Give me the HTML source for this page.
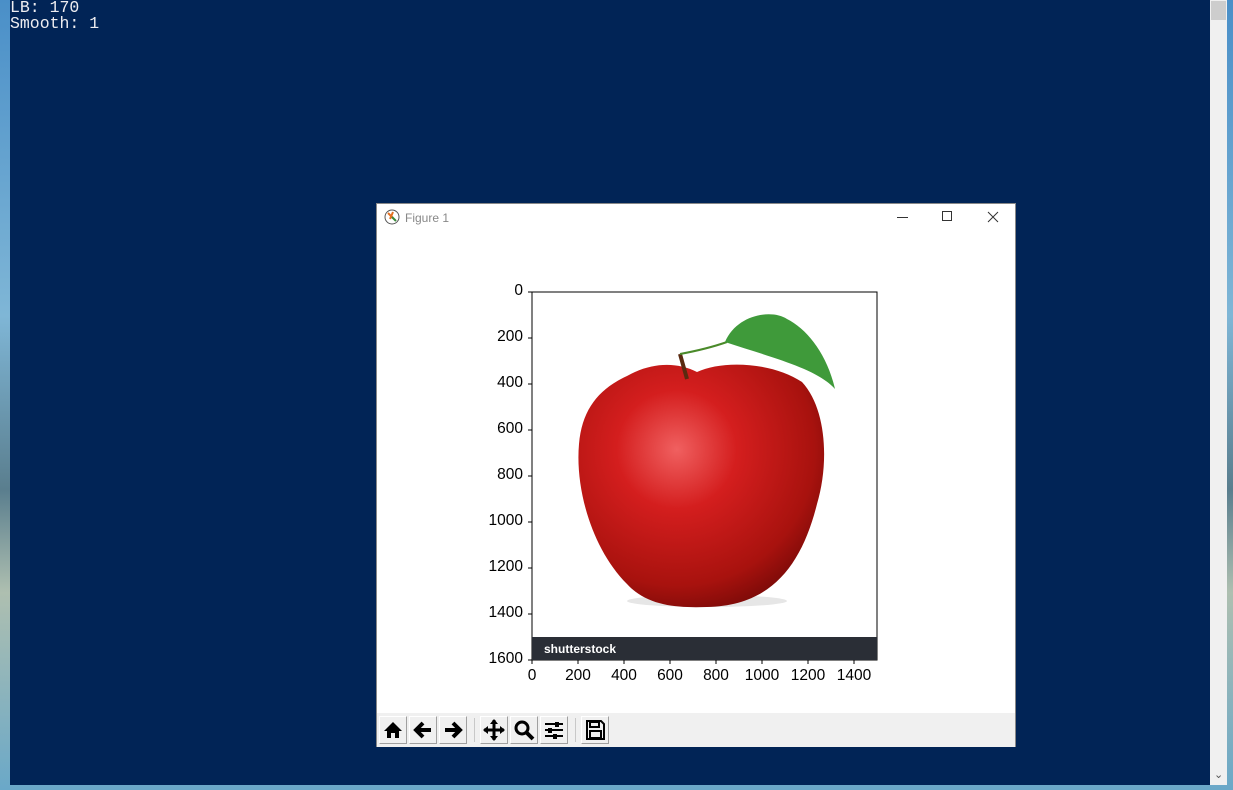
<!DOCTYPE html>
<html><head><style>
*{margin:0;padding:0;box-sizing:border-box}
body{width:1233px;height:790px;overflow:hidden;position:relative;background:linear-gradient(180deg,#4a8fc8 0%,#7fb6d6 40%,#5a7e8e 62%,#aebfb0 75%,#6aa8c8 100%);font-family:"Liberation Sans",sans-serif}
#term{position:absolute;left:10px;top:0;width:1200px;height:785px;background:#012456}
#sb{position:absolute;left:1210px;top:0;width:17px;height:785px;background:#f0f0f0}
#txt{position:absolute;left:10px;top:0px;font:16.5px/16px "Liberation Mono",monospace;color:#eeedf0;white-space:pre}
#win{position:absolute;left:376px;top:203px;width:640px;height:544px;background:#fff;border:1px solid #888}
.tb{position:absolute;left:0;top:509px;width:638px;height:34px;background:#f0f0f0}
.btn{position:absolute;top:3px;width:28px;height:28px;background:#f0f0f0;border:1px solid;border-color:#fff #a0a0a0 #a0a0a0 #fff}
.sep{position:absolute;top:5px;width:1px;height:24px;background:#c8c8c8}
.tl{position:absolute;font-size:15.5px;color:#000;text-align:right;width:60px}
.xl{position:absolute;font-size:15.5px;color:#000;width:60px;text-align:center}
</style></head><body>
<div id="term"></div>
<div id="sb"><div style="position:absolute;left:1px;top:1px;width:15px;height:19px;background:#cdcdcd"></div><div style="position:absolute;left:4px;top:768px;font-size:11px;color:#555">&#8964;</div></div>
<div id="txt">LB: 170
Smooth: 1</div>
<div id="win">
 <svg style="position:absolute;left:7px;top:5px" width="16" height="16"><circle cx="8" cy="8" r="7" fill="#fff" stroke="#555"/><path d="M4 4L9 9M9 3L6 10" stroke="#e57020" stroke-width="2"/><path d="M8 8L12 12" stroke="#3a8a3a" stroke-width="2"/></svg>
 <div style="position:absolute;left:28px;top:7px;font-size:12px;color:#888">Figure 1</div>
 <div style="position:absolute;left:520px;top:13px;width:11px;height:1px;background:#333"></div>
 <div style="position:absolute;left:565px;top:7px;width:10px;height:10px;border:1px solid #333"></div>
 <svg style="position:absolute;left:610px;top:7px" width="12" height="12"><path d="M1 1L11 11M11 1L1 11" stroke="#333"/></svg>

 <svg style="position:absolute;left:0;top:0" width="640" height="510">
  <defs>
   <radialGradient id="ap" cx="0.4" cy="0.35" r="0.7">
    <stop offset="0" stop-color="#f06060"/><stop offset="0.35" stop-color="#d41e1e"/><stop offset="0.8" stop-color="#a8120e"/><stop offset="1" stop-color="#7a0a08"/>
   </radialGradient>
  </defs>
  <rect x="155" y="88" width="345" height="368" fill="#fff" stroke="#000"/>
  <ellipse cx="330" cy="397" rx="80" ry="6" fill="#e6e6e6"/>
  <path d="M250 172 C 275 158, 300 158, 320 168 C 345 156, 395 158, 425 178 C 450 205, 452 260, 440 300 C 425 360, 395 402, 330 403 C 300 404, 270 402, 250 380 C 215 345, 198 285, 202 240 C 205 205, 222 185, 250 172 Z" fill="url(#ap)"/>
  <path d="M310 175 L303 150" stroke="#5a2a10" stroke-width="4"/>
  <path d="M303 150 Q330 145 350 138" stroke="#4a8a2a" stroke-width="2" fill="none"/>
  <path d="M348 138 C 360 110, 395 105, 410 115 C 430 125, 450 150, 458 185 C 440 165, 400 155, 348 138 Z" fill="#3f9a3a"/>
  <rect x="155" y="433" width="345" height="23" fill="#2a2e36"/>
  <text x="167" y="449" font-size="12" font-weight="bold" fill="#fff" font-family="Liberation Sans">shutterstock</text>
  <g stroke="#000">
   <path d="M155 456v4M201 456v4M247 456v4M293 456v4M339 456v4M385 456v4M431 456v4M477 456v4"/>
   <path d="M151 88h4M151 134h4M151 180h4M151 226h4M151 272h4M151 318h4M151 364h4M151 410h4M151 456h4"/>
  </g>
 </svg>
 <div class="tl" style="left:86px;top:78px">0</div>
 <div class="tl" style="left:86px;top:124px">200</div>
 <div class="tl" style="left:86px;top:170px">400</div>
 <div class="tl" style="left:86px;top:216px">600</div>
 <div class="tl" style="left:86px;top:262px">800</div>
 <div class="tl" style="left:86px;top:308px">1000</div>
 <div class="tl" style="left:86px;top:354px">1200</div>
 <div class="tl" style="left:86px;top:400px">1400</div>
 <div class="tl" style="left:86px;top:446px">1600</div>
 <div class="xl" style="left:125px;top:463px">0</div>
 <div class="xl" style="left:171px;top:463px">200</div>
 <div class="xl" style="left:217px;top:463px">400</div>
 <div class="xl" style="left:263px;top:463px">600</div>
 <div class="xl" style="left:309px;top:463px">800</div>
 <div class="xl" style="left:355px;top:463px">1000</div>
 <div class="xl" style="left:401px;top:463px">1200</div>
 <div class="xl" style="left:447px;top:463px">1400</div>

 <div class="tb">
  <div class="btn" style="left:2px"><svg width="26" height="26"><path d="M4 14L13 5L22 14H19V21H15V16H11V21H7V14Z" fill="#000"/></svg></div>
  <div class="btn" style="left:32px"><svg width="26" height="26"><path d="M13 6L6 13L13 20M6 13H21" stroke="#000" stroke-width="4" fill="none"/></svg></div>
  <div class="btn" style="left:62px"><svg width="26" height="26"><path d="M13 6L20 13L13 20M20 13H5" stroke="#000" stroke-width="4" fill="none"/></svg></div>
  <div class="sep" style="left:97px"></div>
  <div class="btn" style="left:103px"><svg width="26" height="26"><path d="M13 3V23M3 13H23" stroke="#000" stroke-width="3"/><path d="M13 2L9 7H17ZM13 24L9 19H17ZM2 13L7 9V17ZM24 13L19 9V17Z" fill="#000"/></svg></div>
  <div class="btn" style="left:133px"><svg width="26" height="26"><circle cx="11" cy="11" r="6" stroke="#000" stroke-width="3" fill="none"/><path d="M15 15L22 22" stroke="#000" stroke-width="4"/></svg></div>
  <div class="btn" style="left:163px"><svg width="26" height="26"><path d="M4 7H22M4 13H22M4 19H22" stroke="#000" stroke-width="2"/><rect x="14" y="5" width="4" height="5" fill="#000"/><rect x="7" y="11" width="4" height="5" fill="#000"/><rect x="12" y="17" width="4" height="5" fill="#000"/></svg></div>
  <div class="sep" style="left:198px"></div>
  <div class="btn" style="left:204px"><svg width="26" height="26"><path d="M5 4H19L22 7V22H5Z" stroke="#000" stroke-width="2" fill="none"/><rect x="8" y="5" width="9" height="5" stroke="#000" stroke-width="2" fill="none"/><rect x="8" y="14" width="11" height="7" stroke="#000" stroke-width="2" fill="none"/></svg></div>
 </div>
</div>
</body></html>
